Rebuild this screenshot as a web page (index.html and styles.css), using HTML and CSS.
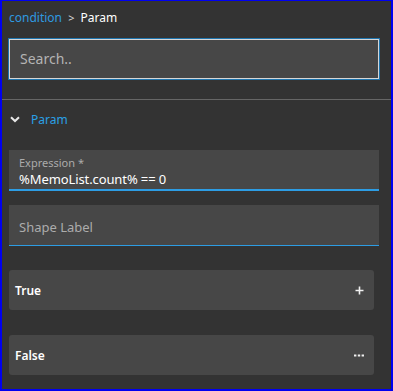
FILE: index.html
```html
<!DOCTYPE html>
<html lang="en">
<head>
  <meta charset="UTF-8">
  <meta name="viewport" content="width=device-width, initial-scale=1.0">
  <title>Param</title>
  <link rel="stylesheet" href="styles.css">
</head>
<body>
  <div class="panel">
    <div class="crumbs">
      <span class="crumb-link">condition</span>
      <span class="crumb-sep">&gt;</span>
      <span class="crumb-current">Param</span>
    </div>

    <div class="search">Search..</div>

    <div class="divider"></div>

    <div class="section-head">
      <svg class="chevron" width="10" height="7" viewBox="0 0 10 7">
        <path d="M1 1.2 L5 5 L9 1.2" fill="none" stroke="#e8e8e8" stroke-width="2"/>
      </svg>
      <span class="section-title">Param</span>
    </div>

    <div class="field field-active">
      <div class="field-label">Expression *</div>
      <div class="field-value">%MemoList.count% == 0</div>
    </div>

    <div class="field field-empty">
      <div class="field-placeholder">Shape Label</div>
    </div>

    <div class="branch">
      <span class="branch-name">True</span>
      <svg class="branch-icon" width="9" height="9" viewBox="0 0 9 9">
        <path d="M4.5 0.5 V8.5 M0.5 4.5 H8.5" stroke="#f0f0f0" stroke-width="1.6"/>
      </svg>
    </div>

    <div class="branch">
      <span class="branch-name">False</span>
      <svg class="branch-icon" width="10" height="3" viewBox="0 0 10 3">
        <path d="M0 1.5 H2.4 M3.8 1.5 H6.2 M7.6 1.5 H10" stroke="#f0f0f0" stroke-width="2"/>
      </svg>
    </div>
  </div>
</body>
</html>
```

FILE: styles.css
```css
body {
  margin: 0;
  padding: 0;
  background-color: #333333;
  font-family: "Noto Sans", "Open Sans", sans-serif;
}

.panel {
  box-sizing: border-box;
  height: 391px;
  border: 2px solid #0000f0;
  border-top-width: 1px;
  background-color: #333333;
}

/* fil d'ariane */
.crumbs {
  padding: 9px 7px 0;
  height: 16px;
  font-size: 12px;
  line-height: 16px;
}

.crumb-link {
  color: #2f9ae0;
}

.crumb-sep {
  color: #d8d8d8;
  margin: 0 3px;
  font-size: 11px;
}

.crumb-current {
  color: #ffffff;
}

.search {
  box-sizing: border-box;
  height: 42px;
  margin: 12px 11px 0 6px;
  padding-left: 11px;
  border: 1px solid #1f74ad;
  box-shadow: inset 0 0 0 1px #d6d6d6;
  background-color: #474747;
  color: #b4b4b4;
  font-size: 14px;
  line-height: 40px;
}

.divider {
  height: 1px;
  margin-top: 19px;
  background-color: #666666;
}

.section-head {
  display: flex;
  align-items: center;
  height: 38px;
  padding-left: 8px;
}

.chevron {
  margin-right: 11px;
}

.section-title {
  color: #2aa0e6;
  font-size: 12px;
}

.field {
  box-sizing: border-box;
  height: 41px;
  margin: 0 12px 0 7px;
  padding-left: 10px;
  background-color: #474747;
}

.field-active {
  margin-top: 12px;
  border-bottom: 2px solid #2d9de4;
  padding-top: 6px;
}

.field-label {
  color: #ababab;
  font-size: 11px;
  line-height: 14px;
}

.field-value {
  color: #ffffff;
  font-size: 13px;
  line-height: 19px;
  letter-spacing: -0.1px;
}

.field-empty {
  margin-top: 14px;
  border-bottom: 1px solid #2d9de4;
}

.field-placeholder {
  color: #acacac;
  font-size: 13px;
  line-height: 44px;
}

.branch {
  display: flex;
  align-items: center;
  justify-content: space-between;
  height: 40px;
  margin: 24px 17px 0 7px;
  padding: 0 10px 0 6px;
  border-radius: 3px;
  background-color: #474747;
}

.branch + .branch {
  margin-top: 25px;
}

.branch-name {
  color: #ffffff;
  font-size: 12px;
  font-weight: 600;
}
```
